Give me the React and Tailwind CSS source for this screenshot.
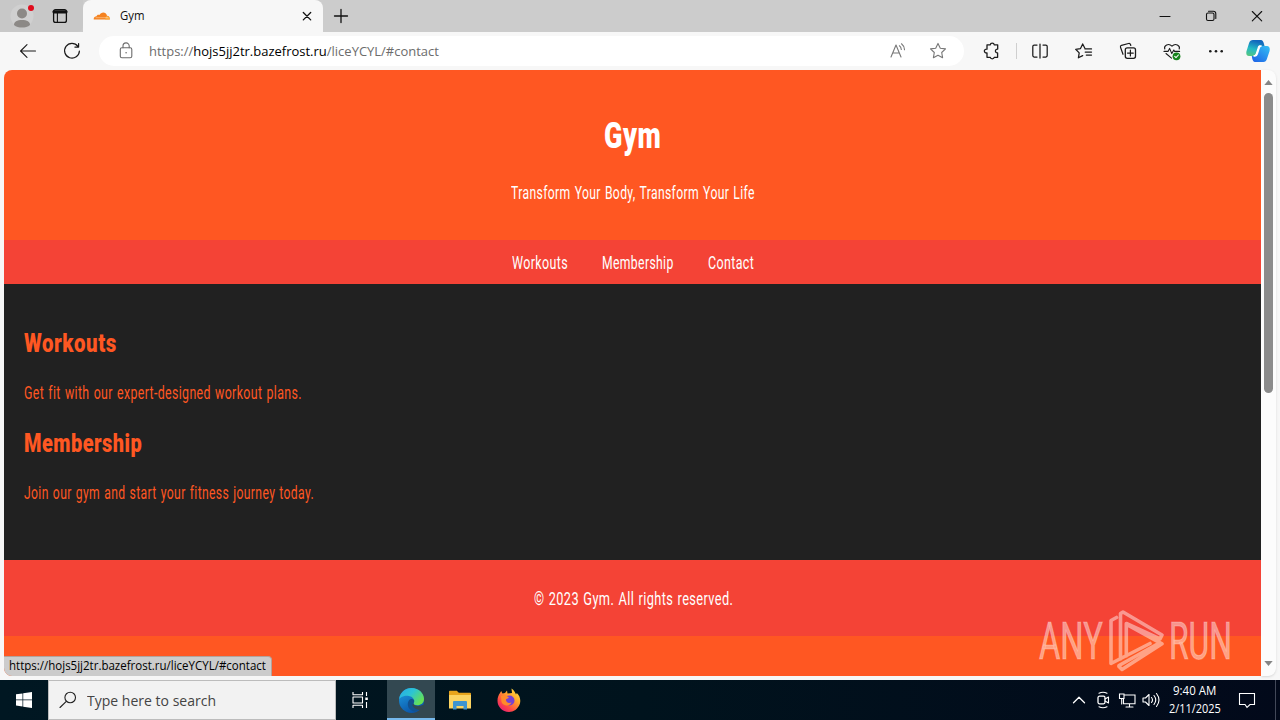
import { useLayoutEffect, useRef } from 'react';

// Single line of text whose glyphs are condensed or widened to fill its box.
function Fit({ className = '', children }) {
  const box = useRef(null);
  const text = useRef(null);
  useLayoutEffect(() => {
    const ratio = box.current.clientWidth / text.current.offsetWidth;
    text.current.style.transform = `scaleX(${ratio})`;
  }, []);
  return (
    <div ref={box} className={`flex shrink-0 items-center whitespace-nowrap ${className}`}>
      <span ref={text} className="block shrink-0 origin-left">{children}</span>
    </div>
  );
}

function Icon({ size = 'size-5', className = '', box = '0 0 20 20', children }) {
  return (
    <svg viewBox={box} className={`block shrink-0 ${size} ${className}`} fill="none" stroke="currentColor" strokeWidth="1.1" strokeLinecap="round" strokeLinejoin="round">
      {children}
    </svg>
  );
}

function Cell({ className = 'w-11', children }) {
  return <div className={`flex h-full shrink-0 items-center justify-center ${className}`}>{children}</div>;
}

const STAR = 'M10 2.4l2.3 4.8 5.2.7-3.8 3.6.9 5.2-4.6-2.5-4.6 2.5.9-5.2-3.8-3.6 5.2-.7z';

function TabBar() {
  return (
    <div className="flex h-8 shrink-0 bg-[#cccccc] text-[#111]">
      <div className="flex w-[83px] shrink-0 items-center rounded-br-md bg-[#c8c8c8]">
        <Icon size="size-6" box="0 0 24 24" className="ml-[10px]">
          <circle cx="12" cy="12" r="11.5" fill="#d0d0d0" stroke="none" />
          <circle cx="12" cy="9.5" r="5" fill="#8c8986" stroke="none" />
          <path d="M4 21c0-3.500 3-5 8-5s8 1.500 8 5c-2 2-5 2.500-8 2.500s-6-.5-8-2.500z" fill="#8c8986" stroke="none" />
          <circle cx="21" cy="4" r="3" fill="#e00b1c" stroke="none" />
        </Icon>
        <Icon className="ml-4">
          <rect x="3.6" y="3.6" width="12.8" height="12.8" rx="2" strokeWidth="1.3" />
          <path d="M4 5.8h12" strokeWidth="3.2" />
          <path d="M7.4 7v9" />
        </Icon>
      </div>
      <div className="flex w-[240px] shrink-0 items-center rounded-t-lg bg-[#f7f7f7]">
        <Icon size="h-4 w-[18px]" box="0 0 18 16" className="ml-[10px]">
          <path d="M.7 11.500C.5 9.200 2.200 8.300 3.600 8.300c.1-1.500 1.800-2 2.800-1.200C8 3.600 13 3.200 14 7.800c2 0 3 1.600 2.800 3.700z" fill="#f58220" stroke="none" />
          <path d="M12 11.500l1-3c2.500-1 4 1 3.800 3z" fill="#fbad41" stroke="none" />
          <path d="M3 9.700h8.700M12.500 9.500h2" stroke="#fbd1a2" strokeWidth=".6" />
        </Icon>
        <Fit className="ml-[9px] h-5 w-[25px] font-['Open_Sans',sans-serif] text-[12.300px]">Gym</Fit>
        <Icon className="ml-[152px]"><path d="M6.300 6.500l7.400 7.400m0-7.400l-7.400 7.400" strokeWidth="1.300" /></Icon>
      </div>
      <Cell className="w-[35px]"><Icon><path d="M10 3.500v13M3.500 10h13" strokeWidth="1.300" /></Icon></Cell>
      <div className="flex-1" />
      <div className="flex w-[138px]">
        <Cell className="w-[46px]"><Icon><path d="M5 10.500h10" /></Icon></Cell>
        <Cell className="w-[46px]"><Icon>
          <rect x="5.500" y="7" width="7.500" height="7.500" rx="1.500" />
          <path d="M7.500 5.300h4.800q2.500 0 2.500 2.500v4.700" />
        </Icon></Cell>
        <Cell className="w-[46px]"><Icon><path d="M5.300 5.500l9.400 9.400m0-9.400l-9.400 9.400" /></Icon></Cell>
      </div>
    </div>
  );
}

function Toolbar() {
  return (
    <div className="flex h-[38px] shrink-0 items-center bg-[#f7f7f7] pl-1.5 text-[#1b1b1b]">
      <Cell><Icon><path d="M17.500 10H2.500M9 3.700L2.600 10 9 16.300" /></Icon></Cell>
      <Cell><Icon><path d="M15.900 5.300A7.400 7.400 0 1 0 17.400 10M16.600 2.600v3.500h-3.700" strokeWidth="1.200" /></Icon></Cell>
      <div className="ml-[5px] flex h-[30px] w-[865px] items-center rounded-full bg-white text-[#6c6c6c]">
        <Icon className="ml-[17px]">
          <rect x="4.300" y="6.800" width="11.500" height="10" rx="1.600" />
          <path d="M7 6.800V5a3.100 3.100 0 0 1 6.200 0v1.800" />
          <circle cx="10.100" cy="11.800" r=".8" fill="currentColor" stroke="none" />
        </Icon>
        <Fit className="ml-[13px] h-6 w-[290px] pt-px font-['Open_Sans',sans-serif] text-[13.300px]">
          https://<span className="text-black">hojs5jj2tr.bazefrost.ru</span>/liceYCYL/#contact
        </Fit>
        <div className="flex-1" />
        <Icon className="mr-5 text-[#777]">
          <path d="M3 16L8 4l5 12M4.700 12h6.700M11.400 4.800q1.700 1.200 1.900 3.700M13.500 2.800q2.700 2 3 6" />
        </Icon>
        <Icon className="mr-4 text-[#777]"><path d={STAR} /></Icon>
      </div>
      <div className="w-1.5" />
      <Cell><Icon>
        <path d="M5 3.800h3.300c.2-2.300 3.700-2.300 3.900 0h3.500v4.300c-3-.3-3 4-.1 3.900v4.300h-3.400c-.2 2-3.700 2-3.900 0H5V12c-3.500.3-3.500-4.200 0-3.900z" strokeWidth="1.300" />
      </Icon></Cell>
      <div className="mx-[1.5px] h-4 w-px bg-[#cfcfcf]" />
      <Cell><Icon>
        <path d="M10 3v14M7 4H4.200Q2.800 4 2.800 5.400v9.200Q2.800 16 4.200 16H7M13 4h2.800q1.400 0 1.400 1.400v9.200q0 1.400-1.400 1.400H13" strokeWidth="1.250" />
      </Icon></Cell>
      <Cell><Icon>
        <path d="M11.100 7.800L8.700 2.900 6.500 7.600l-4.800.7 3.500 3.600-.8 4.900 4.300-2.200M11 7.900h6.500M11.200 11h6.300M12.300 14.100h5.200" strokeWidth="1.250" />
      </Icon></Cell>
      <Cell><Icon>
        <rect x="7.300" y="6.800" width="10.200" height="10.500" rx="2" strokeWidth="1.300" />
        <path d="M12.400 9.200v5.700M9.500 12.100h5.800M5 13.300l-2.500-7Q2 4.800 3.500 4.300L10.500 2.500q1.500-.4 2 1l.3 1" strokeWidth="1.200" />
      </Icon></Cell>
      <Cell><Icon>
        <path d="M2.800 8C1.500 4.700 6.500 1.500 10 5.200 13.500 1.500 18.500 4.700 17.200 8M2 10.400h4l1.600-3 2.200 5.200 2-3.600.8 1.400h5M4 12.500l5.500 4.600" />
        <circle cx="14.500" cy="15.300" r="3.900" fill="#16831b" stroke="none" />
        <path d="M12.700 15.300l1.300 1.300 2.400-2.600" stroke="#fff" />
      </Icon></Cell>
      <Cell><Icon>
        <g fill="currentColor" stroke="none"><circle cx="4.300" cy="10.200" r="1.300" /><circle cx="10" cy="10.200" r="1.300" /><circle cx="15.700" cy="10.200" r="1.300" /></g>
      </Icon></Cell>
      <Cell className="w-10">
        <Icon size="size-6" box="0 0 24 24">
          <defs>
            <linearGradient id="cpLeft" x1="0" y1="1" x2=".3" y2="0"><stop stopColor="#5bc878" /><stop offset=".5" stopColor="#24bac5" /><stop offset="1" stopColor="#1268bd" /></linearGradient>
            <linearGradient id="cpRight" x1="0" y1="1" x2=".8" y2="0"><stop stopColor="#1d5fe6" /><stop offset="1" stopColor="#32b8f3" /></linearGradient>
          </defs>
          <path d="M7 1h8q2 0 3 4l.5 2h-4q-2 0-2.800 2.800l-1.500 5Q9.500 17 7 17H3Q-.3 17 .4 12.600L3 4.200Q4 1 7 1z" fill="url(#cpLeft)" stroke="none" />
          <path d="M17.400 23H9q-2.500 0-3.200-6H8q2 0 2.800-2.800l1.600-5Q13.200 7 16 7h5q3.600.4 2.500 5.200l-2.600 7.800Q20 23 17.400 23z" fill="url(#cpRight)" stroke="none" />
          <path d="M13.200 7h2q-1.600.6-2.200 2.800l-1.600 5Q10.800 17 9 17H8q1.800-.4 2.500-2.600l1.600-5Q12.400 7.400 13.200 7z" fill="#fff" stroke="#fff" strokeWidth="1.300" />
        </Icon>
      </Cell>
    </div>
  );
}

function Watermark() {
  return (
    <div className="absolute bottom-[4px] right-[29px] flex h-[63px] w-[193px] items-center text-white/45">
      <Fit className="h-[52px] w-[64px] pt-0.5 font-['Roboto',sans-serif] text-[51px] leading-none [-webkit-text-stroke:1.2px_rgba(255,255,255,0.25)]">ANY</Fit>
      <svg viewBox="0 0 56 62" className="ml-[5px] h-[62px] w-[56px] shrink-0" fill="none" stroke="currentColor" strokeWidth="3.600" strokeLinejoin="round" strokeLinecap="round">
        <path d="M8.500 7.500L3 10.500V53.500L42 33.500M18.300 46V13.500L52 29 54 25 15 2l-2.500 1.500V49M20.500 15.500L54 33.800 14 59.500l-3-3M11 55.500L50 33.800" />
      </svg>
      <Fit className="ml-[5px] h-[52px] w-[63px] pt-0.5 font-['Roboto',sans-serif] text-[51px] leading-none [-webkit-text-stroke:1.2px_rgba(255,255,255,0.25)]">RUN</Fit>
    </div>
  );
}

function Page() {
  return (
    <div className="relative flex w-[1257px] shrink-0 flex-col overflow-hidden rounded-bl-lg rounded-tl-lg bg-[#ff5722] font-['Roboto',sans-serif] text-white">
      <header className="flex h-[170px] shrink-0 flex-col items-center">
        <Fit className="mt-[45px] h-10 w-[57px] text-[37px] font-black leading-none tracking-[0.02em]">Gym</Fit>
        <Fit className="mt-[26px] h-[26px] w-[244px] text-[17.600px] leading-none tracking-[0.03em] [word-spacing:0.06em]">Transform Your Body, Transform Your Life</Fit>
      </header>
      <nav className="flex h-11 shrink-0 items-center justify-center gap-[34px] bg-[#f44336] pl-px pt-1 text-[17.600px] leading-none tracking-[0.03em]">
        <Fit className="h-6 w-[56px]">Workouts</Fit>
        <Fit className="h-6 w-[72px]">Membership</Fit>
        <Fit className="h-6 w-[46px]">Contact</Fit>
      </nav>
      <main className="flex h-[276px] shrink-0 flex-col bg-[#212121] pl-5 text-[#ff5722]">
        <Fit className="mt-[43px] h-[32px] w-[93px] text-[26px] font-black leading-none tracking-[0.025em]">Workouts</Fit>
        <Fit className="mt-[23px] h-6 w-[278px] text-[17.600px] leading-none tracking-[0.03em] [word-spacing:0.06em]">Get fit with our expert-designed workout plans.</Fit>
        <Fit className="mt-[21px] h-[32px] w-[118px] text-[26px] font-black leading-none tracking-[0.025em]">Membership</Fit>
        <Fit className="mt-[23px] h-6 w-[290px] text-[17.600px] leading-none tracking-[0.03em] [word-spacing:0.06em]">Join our gym and start your fitness journey today.</Fit>
      </main>
      <footer className="flex h-[76px] shrink-0 items-center justify-center bg-[#f44336] pt-1">
        <Fit className="ml-[2px] h-6 w-[199px] text-[17.600px] leading-none tracking-[0.03em] [word-spacing:0.06em]">© 2023 Gym. All rights reserved.</Fit>
      </footer>
      <Watermark />
      <div className="absolute bottom-0 left-0 flex h-5 w-[268px] items-center rounded-tr border-r border-t border-[#b4a29b] bg-[#cccccc] pl-[5px] text-black">
        <Fit className="h-5 w-[257px] pb-0.5 font-['Open_Sans',sans-serif] text-[12px] leading-none">https://hojs5jj2tr.bazefrost.ru/liceYCYL/#contact</Fit>
      </div>
    </div>
  );
}

function ScrollBar() {
  return (
    <div className="flex w-[15px] shrink-0 flex-col items-center rounded-r-lg bg-[#fcfcfc] text-[#858585] shadow-sm">
      <svg viewBox="0 0 10 6" className="mt-[10px] h-[5px] w-[9px]" fill="currentColor"><path d="M5 0l5 6H0z" /></svg>
      <div className="mt-[8px] h-[300px] w-[9px] rounded-full bg-[#8b8b8b]" />
      <div className="flex-1" />
      <svg viewBox="0 0 10 6" className="mb-[10px] h-[5px] w-[9px]" fill="currentColor"><path d="M5 6l5-6H0z" /></svg>
    </div>
  );
}

function Taskbar() {
  return (
    <div className="flex h-10 shrink-0 bg-linear-to-r from-[#001722] via-[#00131d] to-[#02091a] font-['Open_Sans',sans-serif] text-white">
      <Cell className="w-12">
        <svg viewBox="0 0 16 16" className="size-4" fill="#fff"><path d="M0 2.300l6.500-.9v6.200H0zM7.200 1.300L16 0v7.600H7.200zM0 8.300h6.500v6.200L0 13.600zM7.200 8.300H16V16l-8.800-1.300z" /></svg>
      </Cell>
      <div className="flex w-72 shrink-0 items-center border border-[#bcbcbc] bg-[#f2f2f2] text-[#444]">
        <Icon className="ml-[9px] text-[#222]"><circle cx="12.200" cy="7.500" r="5.300" /><path d="M8.300 11.400L2 17.500" /></Icon>
        <Fit className="ml-[9px] h-6 w-[129px] text-[15px]">Type here to search</Fit>
      </div>
      <Cell className="w-[51px]">
        <Icon className="mr-[3px]">
          <path d="M3 2v2.700h9.500V2M3 18v-2.700h9.500V18M3 7h9.500v6H3zM16.500 2v4M16.500 12v6" strokeLinecap="butt" />
          <rect x="15.300" y="7.500" width="2.500" height="2.500" fill="#fff" stroke="none" />
        </Icon>
      </Cell>
      <Cell className="w-12 border-b-2 border-[#76b9ed] bg-[#334851]">
        <svg viewBox="0 0 24 24" className="mt-[2px] size-[25px]">
          <defs>
            <linearGradient id="edTop" x1="0" x2="1" y2=".6"><stop stopColor="#28a9e8" /><stop offset=".5" stopColor="#2cc4d4" /><stop offset="1" stopColor="#66e052" /></linearGradient>
            <linearGradient id="edLow" y1="0" x1="0" x2=".5" y2="1"><stop stopColor="#1fa0e4" /><stop offset="1" stopColor="#0b55a8" /></linearGradient>
          </defs>
          <circle cx="12" cy="12" r="12" fill="url(#edLow)" />
          <path d="M.1 11C1 4 6 0 12 0c7 0 12 5 12 10.500 0 4-3 6-6.500 6-2.500 0-4-1-3.700-2C15.500 12.500 14 8 8.500 7.500 4.500 7.200 1 9 .1 11z" fill="url(#edTop)" />
          <path d="M14 14.500c-1 3 3.500 5 8.500 2.500-1.500 3.500-5 5.500-8 5.500C9 21.500 7 16 9.500 12c1-1.500 3-2 4.700-.7.800 1 .5 2-.2 3.200z" fill="#12518f" />
          <path d="M13.800 14.500c-.6 2.200 4 4 9 1.700l1.500 1.400-2 3.400c-4 .2-9-1.500-9.500-5z" fill="#334851" />
        </svg>
      </Cell>
      <Cell className="w-[50px]">
        <svg viewBox="0 0 22 20" className="h-5 w-[22px]">
          <path d="M0 1.500Q0 .8.800.8h7l2 2H21q1 0 1 1V18H0z" fill="#e8a51c" />
          <path d="M0 5h22v13.500H0z" fill="#fcd462" />
          <path d="M4 19.500v-7.500q0-1 1-1h12q1 0 1 1v7.500h-3.500V16h-7v3.500z" fill="#3e94cf" />
        </svg>
      </Cell>
      <Cell className="w-12">
        <svg viewBox="0 0 24 24" className="size-6">
          <defs><linearGradient id="ff" x1="1" y1="0" x2=".2" y2="1"><stop stopColor="#fff04a" /><stop offset=".4" stopColor="#ffa72b" /><stop offset=".75" stopColor="#ff4846" /><stop offset="1" stopColor="#e51b77" /></linearGradient></defs>
          <path d="M3 5l1.200-2 1.300 2.500L8 5l2-2.500.5 3L15 5l-.5-4.500C17 2 18 4 19 6.500l.8-1.500C23 8 24 12 22.800 16 21 21 16.500 24 12 24 5 24 .3 18.500.5 12.500.5 9.500 1.500 7 3 5z" fill="url(#ff)" />
          <circle cx="12.500" cy="12.500" r="5" fill="#7542d4" />
          <path d="M4 8c3-1.500 6-.5 8 1.700l-3 1.600c-.4 3 2.500 4.500 5.500 3.200-1.500 4-8.500 4-10-.5z" fill="#ff8b2b" />
        </svg>
      </Cell>
      <div className="flex-1" />
      <Cell className="w-6"><Icon><path d="M4.500 12.800L10 7.200l5.500 5.600" strokeWidth="1.300" /></Icon></Cell>
      <Cell className="w-6"><Icon>
        <rect x="5" y="6.200" width="7" height="7.600" rx="1.500" strokeWidth="1.300" />
        <path d="M12 9l3.500-2v6L12 11M6 3.300q4-2 8 0M6 16.700q4 2 8 0" />
      </Icon></Cell>
      <Cell className="w-6"><Icon>
        <path d="M7.500 5H18v8.700H6.500V8.500M9 17h7M12.500 14v3M2.500 4h4.500v4.500H2.500zM4.700 8.500V14" strokeLinejoin="miter" />
      </Icon></Cell>
      <Cell className="w-6"><Icon>
        <path d="M2 8h2.500L8 4.500v11L4.500 12H2zM10.500 7.500q2 2.500 0 5M13 5.500q3.500 4.500 0 9M15.500 3.500q5 6.500 0 13" />
      </Icon></Cell>
      <div className="flex w-[64px] shrink-0 flex-col items-center pt-[1px] text-[12px]">
        <Fit className="mr-0.5 h-[19px] w-[43px]">9:40 AM</Fit>
        <Fit className="h-[17px] w-[52px]">2/11/2025</Fit>
      </div>
      <Cell className="w-10"><Icon><path d="M2.500 3.500h15v11H13L10 17.300 8 14.500H2.500z" strokeLinejoin="miter" /></Icon></Cell>
      <div className="ml-[8px] w-[5px] border-l border-[#424858]" />
    </div>
  );
}

export default function App() {
  return (
    <div className="flex h-[720px] w-[1280px] flex-col overflow-hidden bg-[#f7f7f7]">
      <TabBar />
      <Toolbar />
      <div className="flex h-[606px] shrink-0 pl-1">
        <Page />
        <ScrollBar />
      </div>
      <div className="h-1 shrink-0" />
      <Taskbar />
    </div>
  );
}
